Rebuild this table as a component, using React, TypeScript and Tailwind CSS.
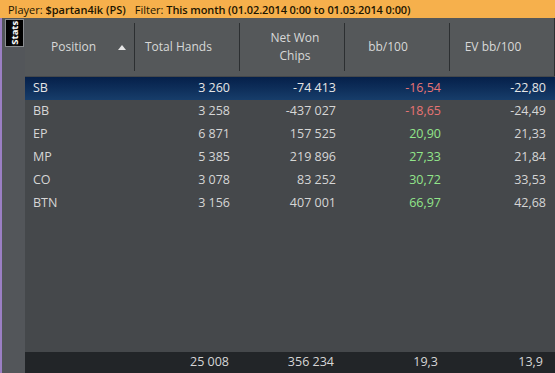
const rows = [
  { pos: "SB", hands: "3 260", net: "-74 413", bb: "-16,54", ev: "-22,80", neg: true },
  { pos: "BB", hands: "3 258", net: "-437 027", bb: "-18,65", ev: "-24,49", neg: true },
  { pos: "EP", hands: "6 871", net: "157 525", bb: "20,90", ev: "21,33", neg: false },
  { pos: "MP", hands: "5 385", net: "219 896", bb: "27,33", ev: "21,84", neg: false },
  { pos: "CO", hands: "3 078", net: "83 252", bb: "30,72", ev: "33,53", neg: false },
  { pos: "BTN", hands: "3 156", net: "407 001", bb: "66,97", ev: "42,68", neg: false },
];

const cols = "grid grid-cols-[109px_105px_105px_105px_105px]";

const App = () => {
  return (
    <div
      className="w-[555px] h-[373px] flex flex-col overflow-hidden bg-[#45484b] text-[12px]"
      style={{ fontFamily: '"Open Sans", "Noto Sans", sans-serif' }}
    >
      <div className="h-[18px] bg-[#f6b04c] flex items-center pl-2 text-[11px] text-[#1c1500] leading-none whitespace-nowrap">
        <span>Player:&nbsp;</span>
        <span className="font-semibold">$partan4ik (PS)</span>
        <span className="ml-[9px]">Filter:&nbsp;</span>
        <span className="font-semibold tracking-[-0.1px]">This month (01.02.2014 0:00 to 01.03.2014 0:00)</span>
      </div>
      <div className="flex flex-1 min-h-0">
        <div className="w-[25px] flex border-l-2 border-[#9b7fc4] bg-[#53565a]">
          <div className="mt-[1px] ml-[3px] w-[19px] h-[28px] border border-[#8a8d90] bg-gradient-to-r from-[#000] via-[#1a1a1a] to-[#000] flex items-center justify-center">
            <span className="-rotate-90 text-white text-[9.5px] font-bold leading-none">Stats</span>
          </div>
        </div>
        <div className="flex-1 flex flex-col min-w-0">
          <div className={`${cols} h-[58px] bg-[#55585a] text-[#d8d8d8] text-[12px] border-r border-[#2c2f31]`}>
            <div className="flex items-center relative pl-[26px]">
              <span>Position</span>
              <svg className="absolute left-[93px] top-[27px]" width="8" height="5" viewBox="0 0 8 5">
                <path d="M0 5 L4 0 L8 5 Z" fill="#e6e6e6" />
              </svg>
            </div>
            <div className="flex items-center pl-[11px] py-[5px]">
              <div className="h-full w-px bg-[#2c2f31] -ml-[11px] mr-[10px]" />
              <span>Total Hands</span>
            </div>
            {["Net Won Chips", "bb/100", "EV bb/100"].map((h, i) => (
              <div key={h} className="flex items-center py-[5px]">
                <div className="h-full w-px bg-[#2c2f31]" />
                <span className={`flex-1 text-center leading-[18px] pr-[18px] ${i === 0 ? "px-[24px]" : ""}`}>{h}</span>
              </div>
            ))}
          </div>
          <div className="flex-1 pt-[1px] text-[12.5px]">
            {rows.map((r, i) => (
              <div
                key={r.pos}
                className={`${cols} h-[23px] items-center text-[#d6d6d6] ${i === 0 ? "bg-gradient-to-b from-[#06204a] to-[#173d6a] text-[#e6e6e6] h-[22px]" : ""}`}
              >
                <div className="pl-[8px]">{r.pos}</div>
                <div className="text-right pr-[9px]">{r.hands}</div>
                <div className="text-right pr-[8px]">{r.net}</div>
                <div className={`text-right pr-[8px] ${r.neg ? "text-[#e87474]" : "text-[#92e58a]"}`}>{r.bb}</div>
                <div className="text-right pr-[8px]">{r.ev}</div>
              </div>
            ))}
          </div>
          <div className={`${cols} h-[21px] items-center bg-[#222528] text-[#d6d6d6] text-[12.5px]`}>
            <div />
            <div className="text-right pr-[10px]">25 008</div>
            <div className="text-right pr-[10px]">356 234</div>
            <div className="text-right pr-[11px]">19,3</div>
            <div className="text-right pr-[11px]">13,9</div>
          </div>
        </div>
      </div>
    </div>
  );
};

export default App;
